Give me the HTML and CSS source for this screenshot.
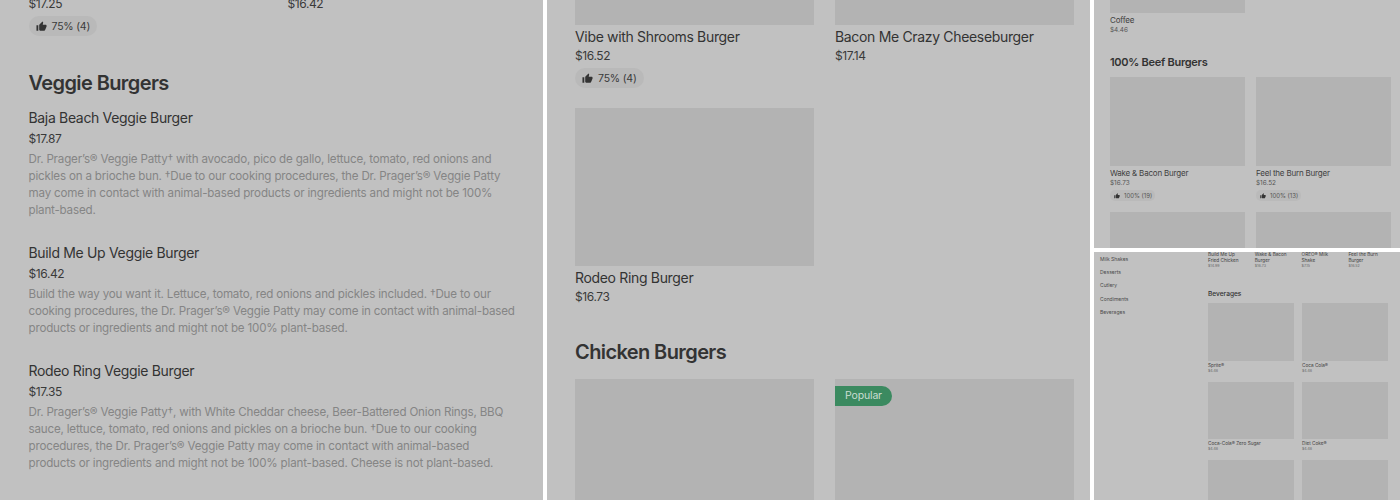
FILE: index.html
```html
<!DOCTYPE html>
<html lang="en">
<head>
<meta charset="utf-8">
<title>Menu</title>
<link rel="stylesheet" href="styles.css">
</head>
<body>
<svg class="defs" width="0" height="0"><symbol id="thumb" viewBox="0 0 24 24"><path d="M1 21h4V9H1v12zm22-11c0-1.1-.9-2-2-2h-6.31l.95-4.57.03-.32c0-.41-.17-.79-.44-1.06L14.17 1 7.59 7.59C7.22 7.95 7 8.45 7 9v10c0 1.1.9 2 2 2h9c.83 0 1.54-.5 1.84-1.22l3.02-7.05c.09-.23.14-.47.14-.73v-2z"/></symbol></svg>
<main class="sheet">

<section class="panel panel-list">
  <div class="list-top">
    <div class="list-col">
      <div class="price">$17.25</div>
      <div class="chip"><svg class="thumb"><use href="#thumb"/></svg>75% (4)</div>
    </div>
    <div class="list-col"><div class="price">$16.42</div></div>
  </div>
  <h2 class="heading">Veggie Burgers</h2>
  <article class="row">
    <h3 class="title">Baja Beach Veggie Burger</h3>
    <div class="price">$17.87</div>
    <p class="desc">Dr. Prager’s® Veggie Patty† with avocado, pico de gallo, lettuce, tomato, red onions and pickles on a brioche bun. †Due to our cooking procedures, the Dr. Prager’s® Veggie Patty may come in contact with animal-based products or ingredients and might not be 100% plant-based.</p>
  </article>
  <article class="row">
    <h3 class="title">Build Me Up Veggie Burger</h3>
    <div class="price">$16.42</div>
    <p class="desc">Build the way you want it. Lettuce, tomato, red onions and pickles included. †Due to our cooking procedures, the Dr. Prager’s® Veggie Patty may come in contact with animal-based products or ingredients and might not be 100% plant-based.</p>
  </article>
  <article class="row">
    <h3 class="title">Rodeo Ring Veggie Burger</h3>
    <div class="price">$17.35</div>
    <p class="desc">Dr. Prager’s® Veggie Patty†, with White Cheddar cheese, Beer-Battered Onion Rings, BBQ sauce, lettuce, tomato, red onions and pickles on a brioche bun. †Due to our cooking procedures, the Dr. Prager’s® Veggie Patty may come in contact with animal-based products or ingredients and might not be 100% plant-based. Cheese is not plant-based.</p>
  </article>
</section>

<section class="panel panel-grid">
  <div class="cards cards-first">
    <article class="card">
      <div class="photo"></div>
      <h3 class="title">Vibe with Shrooms Burger</h3>
      <div class="price">$16.52</div>
      <div class="chip"><svg class="thumb"><use href="#thumb"/></svg>75% (4)</div>
    </article>
    <article class="card">
      <div class="photo"></div>
      <h3 class="title">Bacon Me Crazy Cheeseburger</h3>
      <div class="price">$17.14</div>
    </article>
    <article class="card">
      <div class="photo"></div>
      <h3 class="title">Rodeo Ring Burger</h3>
      <div class="price">$16.73</div>
    </article>
  </div>
  <h2 class="heading">Chicken Burgers</h2>
  <div class="cards cards-next">
    <article class="card"><div class="photo"></div></article>
    <article class="card"><div class="photo"><span class="badge">Popular</span></div></article>
  </div>
</section>

<section class="panel panel-small">
  <div class="small-cards small-first">
    <article class="small-card">
      <div class="small-photo"></div>
      <h3 class="small-title">Coffee</h3>
      <div class="small-price">$4.46</div>
    </article>
  </div>
  <h2 class="small-heading">100% Beef Burgers</h2>
  <div class="small-cards">
    <article class="small-card">
      <div class="small-photo"></div>
      <h3 class="small-title">Wake &amp; Bacon Burger</h3>
      <div class="small-price">$16.73</div>
      <div class="small-chip"><svg class="small-thumb"><use href="#thumb"/></svg>100% (19)</div>
    </article>
    <article class="small-card">
      <div class="small-photo"></div>
      <h3 class="small-title">Feel the Burn Burger</h3>
      <div class="small-price">$16.52</div>
      <div class="small-chip"><svg class="small-thumb"><use href="#thumb"/></svg>100% (13)</div>
    </article>
    <article class="small-card"><div class="small-photo"></div></article>
    <article class="small-card"><div class="small-photo"></div></article>
  </div>
</section>

<section class="panel panel-tiny">
  <nav class="side">
    <a class="side-link">Milk Shakes</a>
    <a class="side-link">Desserts</a>
    <a class="side-link">Cutlery</a>
    <a class="side-link">Condiments</a>
    <a class="side-link">Beverages</a>
  </nav>
  <div class="tiny-main">
    <div class="tiny-four">
      <article><h3 class="tiny-title">Build Me Up Fried Chicken</h3><div class="tiny-price">$14.99</div></article>
      <article><h3 class="tiny-title">Wake &amp; Bacon Burger</h3><div class="tiny-price">$16.73</div></article>
      <article><h3 class="tiny-title">OREO® Milk Shake</h3><div class="tiny-price">$7.15</div></article>
      <article><h3 class="tiny-title">Feel the Burn Burger</h3><div class="tiny-price">$16.52</div></article>
    </div>
    <h2 class="tiny-heading">Beverages</h2>
    <div class="tiny-two">
      <article><div class="tiny-photo"></div><h3 class="tiny-title">Sprite®</h3><div class="tiny-price">$4.46</div></article>
      <article><div class="tiny-photo"></div><h3 class="tiny-title">Coca Cola®</h3><div class="tiny-price">$4.46</div></article>
      <article><div class="tiny-photo"></div><h3 class="tiny-title">Coca-Cola® Zero Sugar</h3><div class="tiny-price">$4.46</div></article>
      <article><div class="tiny-photo"></div><h3 class="tiny-title">Diet Coke®</h3><div class="tiny-price">$4.46</div></article>
      <article><div class="tiny-photo"></div></article>
      <article><div class="tiny-photo"></div></article>
    </div>
  </div>
</section>

</main>
</body>
</html>
```

FILE: styles.css
```css
* { box-sizing: border-box; }
html, body { margin: 0; height: 500px; overflow: hidden; background: #fff; }
body { font-family: Inter, "Liberation Sans", sans-serif; color: #333; }
h2, h3, p { margin: 0; font-weight: 400; }
.defs { position: absolute; }

.sheet {
  display: grid;
  grid-template-columns: 543px 543px 306px;
  grid-template-rows: 248px 248px;
  gap: 4px;
  height: 500px;
}
.panel { background: #c1c1c1; overflow: hidden; }
.panel-list { grid-row: 1 / 3; padding: 0 25px 0 28.5px; }
.panel-grid { grid-row: 1 / 3; padding: 0 17px 0 28px; }
.panel-small { padding: 0 9px 0 16px; }
.panel-tiny { display: flex; }

.list-top {
  display: grid;
  grid-template-columns: 239px 239px;
  column-gap: 20px;
  margin-top: -4px;
}
.heading {
  font-size: 20px;
  line-height: 28px;
  font-weight: 600;
  letter-spacing: -0.6px;
  color: #333;
  margin-top: 33px;
}
.title { font-size: 14px; line-height: 20px; color: #333; letter-spacing: -0.33px; }
.price { font-size: 12px; line-height: 16px; color: #3a3a3a; letter-spacing: -0.4px; }
.chip {
  display: inline-flex;
  align-items: center;
  gap: 5px;
  height: 20px;
  margin-top: 4px;
  padding: 0 7px;
  border-radius: 10px;
  background: #b9b9b9;
  font-size: 10.5px;
  letter-spacing: -0.2px;
  color: #3a3a3a;
}
.thumb { width: 11px; height: 11px; fill: #333; }

.row { margin-top: 24px; }
.heading + .row { margin-top: 11px; }
.row .price { margin-top: 3px; }
.desc { margin-top: 4px; font-size: 11.6px; line-height: 17px; letter-spacing: -0.18px; color: #858585; }

.cards { display: grid; grid-template-columns: 239px 238.5px; column-gap: 21px; row-gap: 20px; }
.cards-first { margin-top: -133px; }
.cards-next { margin-top: 13px; }
.card { display: flex; flex-direction: column; align-items: flex-start; }
.card .photo { position: relative; width: 100%; height: 158px; background: #b3b3b3; }
.card .title { margin-top: 2px; }
.card .price { margin-top: 1px; }
.badge {
  position: absolute;
  top: 7px;
  left: 0;
  height: 20px;
  padding: 0 10px;
  border-radius: 0 10px 10px 0;
  background: #3b8a60;
  color: #c9ddd2;
  font-size: 10.5px;
  letter-spacing: -0.15px;
  line-height: 20px;
}

.small-cards { display: grid; grid-template-columns: 135px 135px; column-gap: 11px; row-gap: 11px; }
.small-first { margin-top: -76px; }
.small-card { display: flex; flex-direction: column; align-items: flex-start; }
.small-photo { width: 100%; height: 89px; background: #b3b3b3; }
.small-title { font-size: 8px; line-height: 12px; letter-spacing: -0.2px; color: #404040; margin-top: 1px; }
.small-price { font-size: 6.4px; line-height: 9px; color: #555; }
.small-chip {
  display: inline-flex;
  align-items: center;
  gap: 4px;
  height: 11px;
  margin-top: 2px;
  padding: 0 3px 0 4px;
  border-radius: 5px;
  background: #bababa;
  font-size: 6px;
  color: #555;
}
.small-thumb { width: 6px; height: 6px; fill: #333; }
.small-heading {
  font-size: 11px;
  line-height: 16px;
  font-weight: 600;
  letter-spacing: -0.28px;
  color: #333;
  margin: 19px 0 7px;
}

.side { width: 114px; padding: 3.5px 0 0 6px; display: flex; flex-direction: column; gap: 7.4px; }
.side-link { font-size: 5px; line-height: 6px; color: #4a4a4a; }
.tiny-main { flex: 1; }
.tiny-four { display: grid; grid-template-columns: repeat(4, 38.5px); column-gap: 8.3px; margin-top: -1px; }
.tiny-title { font-size: 4.7px; line-height: 6.2px; color: #404040; }
.tiny-price { font-size: 3.6px; line-height: 6px; color: #666; }
.tiny-photo { height: 57.5px; background: #b3b3b3; margin-bottom: 1px; }
.tiny-heading { font-size: 6.6px; line-height: 9px; font-weight: 500; color: #333; margin: 21px 0 4px; }
.tiny-two { display: grid; grid-template-columns: 86px 86px; column-gap: 8px; row-gap: 7.5px; }
```
